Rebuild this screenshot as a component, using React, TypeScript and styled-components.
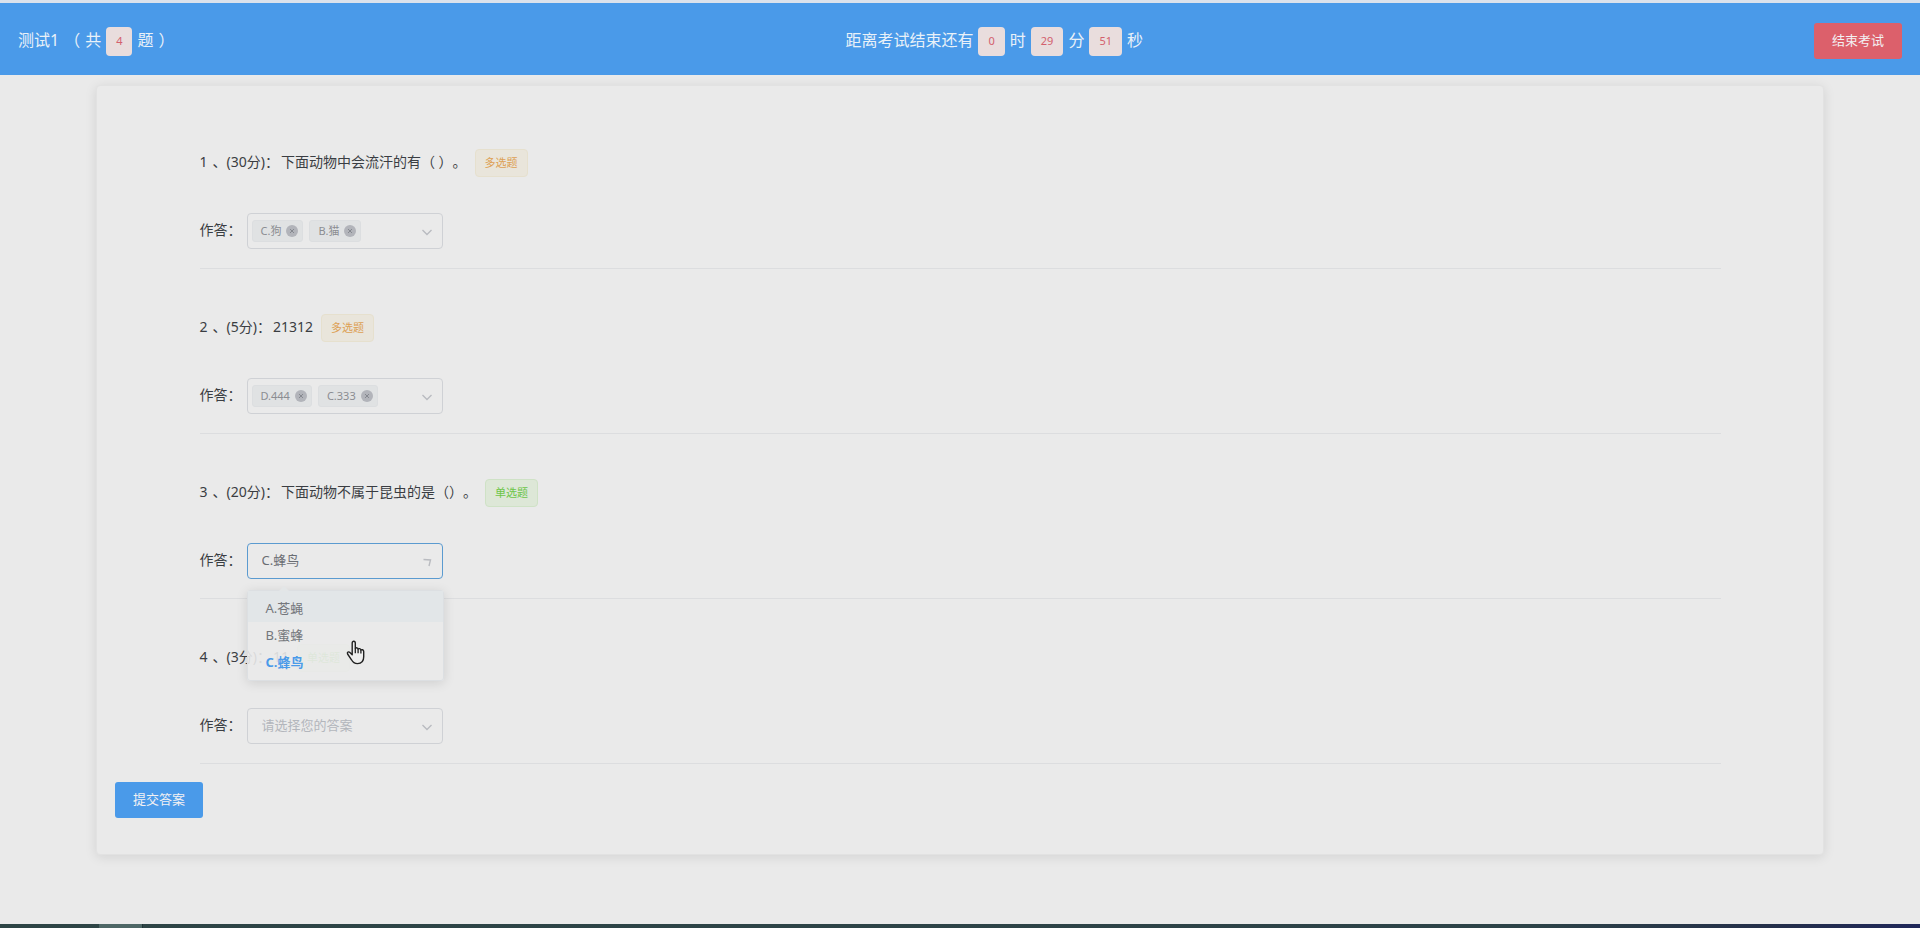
import React, { useState } from "react";
import styled, { createGlobalStyle } from "styled-components";

const GlobalStyle = createGlobalStyle`
  *, *::before, *::after { box-sizing: border-box; }
  body {
    margin: 0;
    background: #eaeaea;
    color: #3a3d42;
    font: 14px/20px "Noto Sans", "Noto Sans CJK SC", sans-serif;
    text-spacing-trim: space-all;
  }
  button, select { font-family: inherit; margin: 0; }
`;

const Page = styled.div`
  display: flex;
  flex-direction: column;
  min-height: 100vh;
  border-top: 3px solid #dbe2ec;
`;

const Header = styled.header`
  display: flex;
  justify-content: space-between;
  align-items: center;
  height: 72px;
  padding: 4px 18px 0;
  background: #4a9ae9;
  color: #e9f1f8;
`;

const HeaderText = styled.div`
  display: flex;
  align-items: center;
  gap: 5px;
  font-size: 16px;
  line-height: 20px;
`;

const HeaderWord = styled.span`
  padding-bottom: 2px;
`;

const CountBadge = styled.span`
  height: 29px;
  padding: 0 10px;
  border-radius: 4px;
  background: #e9dddd;
  color: #d3606d;
  font-size: 11px;
  line-height: 28px;
`;

const ActionButton = styled.button<{ $danger?: boolean }>`
  height: 36px;
  padding: 0 18px 2px;
  border: 0;
  border-radius: 3px;
  background: ${(p) => (p.$danger ? "#dc606b" : "#4a9ae9")};
  color: #f3f1f3;
  font-size: 13px;
  line-height: 34px;
  cursor: pointer;
`;

const Main = styled.main`
  flex: 1;
  padding: 10px 5% 60px;
`;

const Card = styled.form`
  padding: 18px 18px 36px;
  border: 1px solid #e2e2e2;
  border-radius: 4px;
  background: #eaeaea;
  box-shadow: 0 2px 12px rgba(0, 0, 0, 0.1);
`;

const QuestionList = styled.ol`
  margin: 0 5% 18px;
  padding: 0;
  list-style: none;
`;

const QuestionItem = styled.li`
  padding: 45px 0 19px;
  border-bottom: 1px solid #dcdddf;
`;

const QuestionTitle = styled.div`
  display: flex;
  align-items: center;
  height: 28px;
  margin-bottom: 36px;
  white-space: nowrap;
`;

const QuestionNumber = styled.span`
  padding: 0 5px 2px 0;
`;

const QuestionScore = styled.span`
  padding: 0 2px 2px 0;
`;

const QuestionText = styled.span`
  padding: 0 8px 2px 0;
`;

const KindTag = styled.span<{ $multiple: boolean }>`
  height: 28px;
  padding: 0 9px;
  border: 1px solid ${(p) => (p.$multiple ? "#e6e0ce" : "#cfe2c6")};
  border-radius: 4px;
  background: ${(p) => (p.$multiple ? "#e9e5db" : "#dde7d7")};
  color: ${(p) => (p.$multiple ? "#dda054" : "#6cc548")};
  font-size: 11px;
  line-height: 26px;
`;

const AnswerRow = styled.div`
  display: flex;
  align-items: center;
`;

const AnswerLabel = styled.label`
  width: 47px;
  padding-bottom: 2px;
  white-space: nowrap;
`;

const SelectBox = styled.div<{ $open?: boolean }>`
  position: relative;
  display: flex;
  align-items: center;
  gap: 6px;
  width: 196px;
  height: 36px;
  padding-left: 4px;
  border: 1px solid ${(p) => (p.$open ? "#5b9bd0" : "#cfd1d5")};
  border-radius: 4px;
`;

const NativeSelect = styled.select<{ $empty: boolean }>`
  flex: 1;
  min-width: 0;
  height: 34px;
  padding: 0 30px 2px 10px;
  border: 0;
  outline: 0;
  appearance: none;
  background: transparent;
  color: ${(p) => (p.$empty ? "#b3b6bc" : "#6a6d73")};
  font-size: 13px;
`;

const Arrow = styled.svg`
  position: absolute;
  top: 12px;
  right: 9px;
  width: 12px;
  height: 12px;
  fill: none;
  stroke: #b9bbc0;
  pointer-events: none;
`;

const Chip = styled.span`
  display: flex;
  flex: none;
  align-items: center;
  gap: 5px;
  height: 22px;
  padding: 0 4px 0 8px;
  border: 1px solid #dcdee0;
  border-radius: 3px;
  background: #e0e2e3;
  color: #8b8d92;
  font-size: 11px;
  line-height: 18px;
`;

const ChipClose = styled.button`
  display: flex;
  width: 12px;
  height: 12px;
  padding: 0;
  border: 0;
  border-radius: 50%;
  background: #b2b4ba;
  cursor: pointer;
`;

const Dropdown = styled.ul`
  position: absolute;
  z-index: 2;
  top: 46px;
  left: -1px;
  width: 197px;
  margin: 0;
  padding: 0 0 4px;
  border: 1px solid #dcdfe2;
  border-radius: 3px;
  background: rgba(234, 234, 234, 0.9);
  box-shadow: 0 2px 12px rgba(0, 0, 0, 0.12);
  list-style: none;

  &::before {
    content: "";
    position: absolute;
    top: -5px;
    left: 31px;
    border: 5px solid transparent;
    border-top: 0;
    border-bottom-color: #e3e6e7;
  }
`;

const Option = styled.li<{ $selected: boolean }>`
  height: 27px;
  padding-left: 18px;
  color: ${(p) => (p.$selected ? "#4a9ae9" : "#74777c")};
  font-size: 13px;
  font-weight: ${(p) => (p.$selected ? 700 : 400)};
  line-height: 27px;

  &:first-child {
    height: 31px;
    padding-top: 4px;
    background: #e2e6e8;
  }
`;

const HandCursor = styled.svg`
  position: absolute;
  top: 49px;
  left: 98px;
  width: 20px;
  height: 25px;
`;

const Taskbar = styled.footer`
  display: flex;
  height: 4px;
  padding-left: 99px;
  background: linear-gradient(90deg, #2e4546, #2d4348 80%, #25304a 92%, #20285a);
`;

const ActiveTask = styled.div`
  width: 44px;
  background: #4e6766;
  border-right: 1px solid #1e3235;
`;

type Question = {
  score: number;
  title: string;
  multiple: boolean;
  options: string[];
  chosen: string[];
  open?: boolean;
};

const initialQuestions: Question[] = [
  { score: 30, title: "下面动物中会流汗的有（ ）。", multiple: true, options: [], chosen: ["C.狗", "B.猫"] },
  { score: 5, title: "21312", multiple: true, options: [], chosen: ["D.444", "C.333"] },
  {
    score: 20,
    title: "下面动物不属于昆虫的是（）。",
    multiple: false,
    options: ["A.苍蝇", "B.蜜蜂", "C.蜂鸟"],
    chosen: ["C.蜂鸟"],
    open: true,
  },
  { score: 3, title: "11", multiple: false, options: [], chosen: [] },
];

function Pointer() {
  return (
    <HandCursor viewBox="0 0 20 25" aria-hidden="true">
      <path
        d="M6.2 14.8V3.2C6.2.5 9.3.5 9.3 3.2v5.4c.6-1.2 2.6-1 2.8.6.7-1 2.6-.7 2.8.8.8-.8 2.8-.4 2.8 1.6v5.2c0 4.2-2.4 6.8-6.2 6.8-3.3 0-4.8-1.4-6-3.8L1.6 14c-.9-1.7 1-2.8 2.3-1.5z"
        fill="#eeeeee"
        stroke="#222"
        strokeWidth="1.4"
        strokeLinejoin="round"
      />
      <path d="M9.3 8.4v4.8M12.1 9.2v4M14.9 10v3.4" stroke="#222" strokeWidth="1.3" fill="none" />
    </HandCursor>
  );
}

function AnswerField({ question, id }: { question: Question; id: string }) {
  const [chosen, setChosen] = useState(question.chosen);
  const remove = (name: string) => setChosen(chosen.filter((c) => c !== name));
  return (
    <SelectBox $open={question.open}>
      {question.multiple &&
        chosen.map((name) => (
          <Chip key={name}>
            {name}
            <ChipClose type="button" aria-label={`移除 ${name}`} onClick={() => remove(name)}>
              <svg width="12" height="12" viewBox="0 0 12 12" stroke="#85888f">
                <path d="M4 4l4 4M8 4l-4 4" />
              </svg>
            </ChipClose>
          </Chip>
        ))}
      <NativeSelect
        id={id}
        $empty={!chosen.length}
        value={question.multiple ? "" : chosen[0] ?? ""}
        onChange={(e) => setChosen(question.multiple ? [...chosen, e.target.value] : [e.target.value])}
      >
        <option value="">{question.multiple && chosen.length ? "" : "请选择您的答案"}</option>
        {question.options.map((o) => (
          <option key={o}>{o}</option>
        ))}
      </NativeSelect>
      <Arrow viewBox="0 0 12 12" aria-hidden="true">
        <path d={question.open ? "M2.5 3.5L9.5 4L8 10" : "M1.5 4L6 8.5 10.5 4"} strokeWidth="1.4" />
      </Arrow>
      {question.open && (
        <Dropdown>
          {question.options.map((o) => (
            <Option key={o} $selected={chosen.includes(o)} onClick={() => setChosen([o])}>
              {o}
            </Option>
          ))}
          <Pointer />
        </Dropdown>
      )}
    </SelectBox>
  );
}

export default function App() {
  return (
    <>
      <GlobalStyle />
      <Page>
        <Header>
          <HeaderText>
            <HeaderWord>测试1</HeaderWord>
            <HeaderWord>（</HeaderWord>
            <HeaderWord>共</HeaderWord>
            <CountBadge>4</CountBadge>
            <HeaderWord>题</HeaderWord>
            <HeaderWord>）</HeaderWord>
          </HeaderText>
          <HeaderText>
            <HeaderWord>距离考试结束还有</HeaderWord>
            <CountBadge>0</CountBadge>
            <HeaderWord>时</HeaderWord>
            <CountBadge>29</CountBadge>
            <HeaderWord>分</HeaderWord>
            <CountBadge>51</CountBadge>
            <HeaderWord>秒</HeaderWord>
          </HeaderText>
          <ActionButton type="button" $danger>结束考试</ActionButton>
        </Header>
        <Main>
          <Card onSubmit={(e) => e.preventDefault()}>
            <QuestionList>
              {initialQuestions.map((q, i) => (
                <QuestionItem key={i}>
                  <QuestionTitle>
                    <QuestionNumber>{i + 1}</QuestionNumber>
                    <QuestionScore>、({q.score}分)：</QuestionScore>
                    <QuestionText>{q.title}</QuestionText>
                    <KindTag $multiple={q.multiple}>{q.multiple ? "多选题" : "单选题"}</KindTag>
                  </QuestionTitle>
                  <AnswerRow>
                    <AnswerLabel htmlFor={`answer-${i}`}>作答：</AnswerLabel>
                    <AnswerField question={q} id={`answer-${i}`} />
                  </AnswerRow>
                </QuestionItem>
              ))}
            </QuestionList>
            <ActionButton type="submit">提交答案</ActionButton>
          </Card>
        </Main>
        <Taskbar>
          <ActiveTask />
        </Taskbar>
      </Page>
    </>
  );
}
